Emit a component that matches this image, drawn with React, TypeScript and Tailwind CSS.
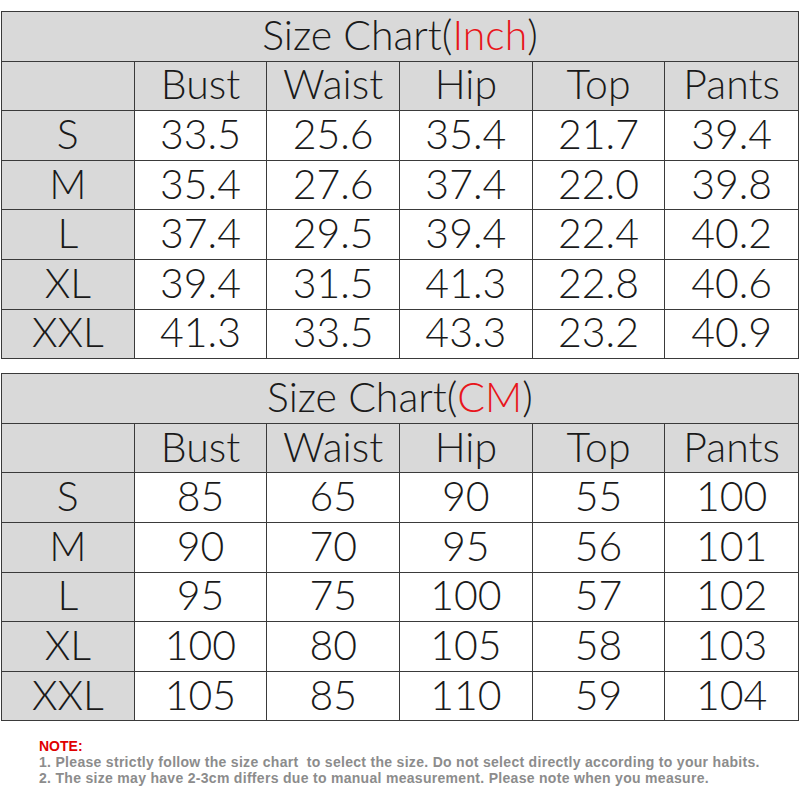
import React from "react";

const headers = ["Bust", "Waist", "Hip", "Top", "Pants"];
const sizes = ["S", "M", "L", "XL", "XXL"];

const inchData = [
  ["33.5", "25.6", "35.4", "21.7", "39.4"],
  ["35.4", "27.6", "37.4", "22.0", "39.8"],
  ["37.4", "29.5", "39.4", "22.4", "40.2"],
  ["39.4", "31.5", "41.3", "22.8", "40.6"],
  ["41.3", "33.5", "43.3", "23.2", "40.9"],
];

const cmData = [
  ["85", "65", "90", "55", "100"],
  ["90", "70", "95", "56", "101"],
  ["95", "75", "100", "57", "102"],
  ["100", "80", "105", "58", "103"],
  ["105", "85", "110", "59", "104"],
];

const thin = { fontFamily: 'Lato, "Open Sans", sans-serif' };

function Cell({ children, gray, last }: { children?: React.ReactNode; gray?: boolean; last?: boolean }) {
  return (
    <div
      className={`h-[49.6px] pb-[3px] flex items-center justify-center text-[41px] font-light leading-[40px] text-[#1a1a1a] border-b border-[#3a3a3a] ${
        last ? "" : "border-r"
      } ${gray ? "bg-[#d9d9d9]" : "bg-white"}`}
    >
      {children}
    </div>
  );
}

function SizeTable({ unit, data }: { unit: string; data: string[][] }) {
  return (
    <div className="mx-[1px] border-t border-l border-r border-[#3a3a3a]" style={thin}>
      <div className="h-[49.6px] pb-[3px] flex items-center justify-center bg-[#d9d9d9] border-b border-[#3a3a3a] text-[41px] font-light leading-[40px] text-[#1a1a1a]">
        Size Chart(<span className="text-[#e8151b]">{unit}</span>)
      </div>
      <div className="grid grid-cols-6">
        <Cell gray />
        {headers.map((h, i) => (
          <Cell key={h} gray last={i === headers.length - 1}>
            {h}
          </Cell>
        ))}
        {sizes.map((s, r) => (
          <React.Fragment key={s}>
            <Cell gray>{s}</Cell>
            {data[r].map((v, c) => (
              <Cell key={c} last={c === 4}>
                {v}
              </Cell>
            ))}
          </React.Fragment>
        ))}
      </div>
    </div>
  );
}

export default function App() {
  return (
    <div className="w-[800px] h-[800px] bg-white pt-[11px]">
      <SizeTable unit="Inch" data={inchData} />
      <div className="h-[14px]" />
      <SizeTable unit="CM" data={cmData} />
      <div
        className="pl-[39px] pt-[17px] text-[14px] leading-[16px] font-semibold tracking-[0.3px]"
        style={{ fontFamily: '"Liberation Sans", Arial, sans-serif' }}
      >
        <div className="text-[#e00000] font-bold tracking-normal">NOTE:</div>
        <div className="text-[#8c8c8c]">
          1. Please strictly follow the size chart&nbsp; to select the size. Do not select directly according to your habits.
        </div>
        <div className="text-[#8c8c8c]">
          2. The size may have 2-3cm differs due to manual measurement. Please note when you measure.
        </div>
      </div>
    </div>
  );
}
